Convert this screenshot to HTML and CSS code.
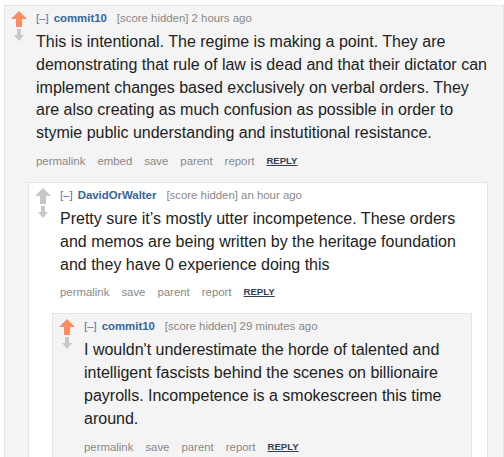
FILE: index.html
```html
<!DOCTYPE html>
<html>
<head>
  <meta charset="utf-8">
  <meta name="viewport" content="width=device-width">
  <title>Comments</title>
  <link rel="stylesheet" href="styles.css">
</head>
<body>

<div class="comment odd">
  <div class="midcol">
    <svg class="up" viewBox="0 0 16 16"><polygon points="8,0 16,8 11,8 11,16 5,16 5,8 0,8" fill="#ff8b60"/></svg>
    <svg class="down" viewBox="0 0 10 12"><polygon points="3,0 7,0 7,6 10,6 5,12 0,6 3,6" fill="#c8c8c8"/></svg>
  </div>
  <div class="entry">
    <p class="tagline"><a class="expand">[–]</a><a class="author">commit10</a><span class="score">[score hidden] 2 hours ago</span></p>
    <div class="md">This is intentional. The regime is making a point. They are demonstrating that rule of law is dead and that their dictator can implement changes based exclusively on verbal orders. They are also creating as much confusion as possible in order to stymie public understanding and instutitional resistance.</div>
    <ul class="buttons">
      <li>permalink</li>
      <li>embed</li>
      <li>save</li>
      <li>parent</li>
      <li>report</li>
      <li class="reply">reply</li>
    </ul>

    <div class="comment even">
      <div class="midcol">
        <svg class="up" viewBox="0 0 16 16"><polygon points="8,0 16,8 11,8 11,16 5,16 5,8 0,8" fill="#c6c6c6"/></svg>
        <svg class="down" viewBox="0 0 10 12"><polygon points="3,0 7,0 7,6 10,6 5,12 0,6 3,6" fill="#c8c8c8"/></svg>
      </div>
      <div class="entry">
        <p class="tagline"><a class="expand">[–]</a><a class="author">DavidOrWalter</a><span class="score">[score hidden] an hour ago</span></p>
        <div class="md">Pretty sure it’s mostly utter incompetence. These orders and memos are being written by the heritage foundation and they have 0 experience doing this</div>
        <ul class="buttons">
          <li>permalink</li>
          <li>save</li>
          <li>parent</li>
          <li>report</li>
          <li class="reply">reply</li>
        </ul>

        <div class="comment odd">
          <div class="midcol">
            <svg class="up" viewBox="0 0 16 16"><polygon points="8,0 16,8 11,8 11,16 5,16 5,8 0,8" fill="#ff8b60"/></svg>
            <svg class="down" viewBox="0 0 10 12"><polygon points="3,0 7,0 7,6 10,6 5,12 0,6 3,6" fill="#c8c8c8"/></svg>
          </div>
          <div class="entry">
            <p class="tagline"><a class="expand">[–]</a><a class="author">commit10</a><span class="score">[score hidden] 29 minutes ago</span></p>
            <div class="md">I wouldn't underestimate the horde of talented and intelligent fascists behind the scenes on billionaire payrolls. Incompetence is a smokescreen this time around.</div>
            <ul class="buttons">
              <li>permalink</li>
              <li>save</li>
              <li>parent</li>
              <li>report</li>
              <li class="reply">reply</li>
            </ul>
          </div>
        </div>
      </div>
    </div>
  </div>
</div>

</body>
</html>
```

FILE: styles.css
```css
body {
  margin: 5px 0 0 4px;
  background: #fff;
  font-family: "Liberation Sans", Arial, sans-serif;
  overflow: hidden;
}
.comment {
  display: flex;
  border: 1px solid #e4e4e4;
  padding: 4px 15px 20px 6px;
}
.odd {
  background: #f4f4f4;
}
.even {
  background: #fff;
}
.comment .comment {
  margin-left: -8px;
  margin-top: 13px;
}
.midcol {
  width: 16px;
  flex: none;
  margin-right: 9px;
  display: flex;
  flex-direction: column;
  align-items: center;
}
.up {
  width: 16px;
  height: 16px;
  margin-top: 1px;
}
.down {
  width: 10px;
  height: 12px;
  margin-top: 2px;
}
.entry {
  flex: 1;
  min-width: 0;
}
.tagline {
  margin: 0;
  font-size: 11.4px;
  line-height: 16px;
  color: #888;
}
.expand {
  color: #4a7ab2;
  margin-right: 5px;
}
.author {
  color: #336699;
  font-weight: bold;
  margin-right: 10px;
}
.md {
  margin-top: 5px;
  font-size: 16px;
  line-height: 22.8px;
  color: #222;
}
.buttons {
  list-style: none;
  margin: 8px 0 0;
  padding: 0;
  display: flex;
  gap: 12px;
  align-items: center;
  font-size: 11.4px;
  line-height: 16px;
  color: #888;
}
.reply {
  text-transform: uppercase;
  font-weight: bold;
  font-size: 9.6px;
  text-decoration: underline;
  color: #334155;
}
```
